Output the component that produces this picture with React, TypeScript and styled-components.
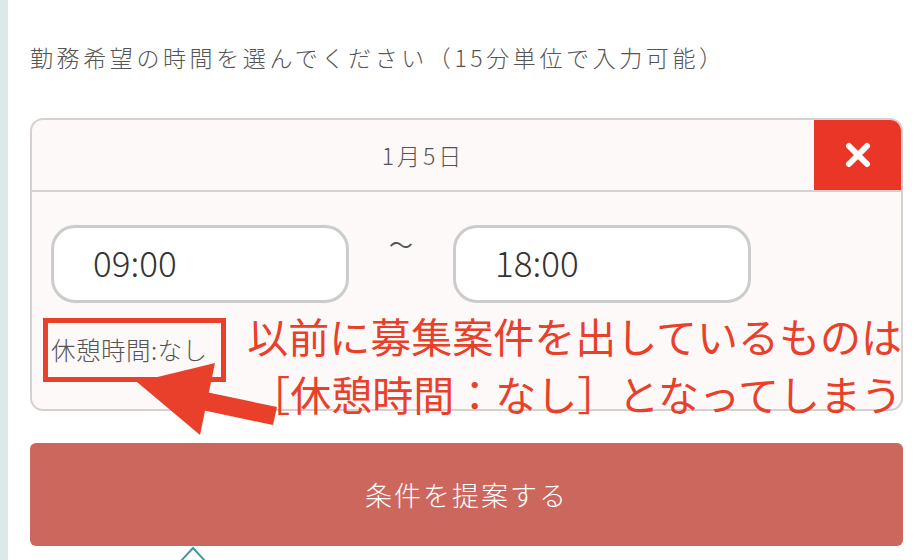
import styled, { createGlobalStyle } from 'styled-components';

const GlobalStyle = createGlobalStyle`
  body {
    margin: 0;
    background: #ffffff;
    font-family: "Noto Sans CJK JP", "Noto Sans", sans-serif;
  }
`;

const App = () => {
  return (
    <Page>
      <GlobalStyle />
      <Stripe />
      <Main>
        <Heading>勤務希望の時間を選んでください（15分単位で入力可能）</Heading>
        <Card>
          <CardHeader>
            <DateLabel>1月5日</DateLabel>
            <CloseButton aria-label="削除">
              <svg width="28" height="28" viewBox="0 0 28 28">
                <path
                  d="M5 5 L23 23 M23 5 L5 23"
                  stroke="#ffffff"
                  strokeWidth="6"
                  strokeLinecap="round"
                />
              </svg>
            </CloseButton>
          </CardHeader>
          <CardBody>
            <TimeRow>
              <TimeBox>09:00</TimeBox>
              <Tilde>〜</Tilde>
              <TimeBox>18:00</TimeBox>
            </TimeRow>
            <BreakLabel>休憩時間:なし</BreakLabel>
          </CardBody>
        </Card>
        <SubmitButton>条件を提案する</SubmitButton>
        <Chevron>
          <svg width="34" height="14" viewBox="0 0 34 14">
            <path d="M4 16 L17 2 L30 16" fill="none" stroke="#3f9c97" strokeWidth="2" />
          </svg>
        </Chevron>
      </Main>

      {/* annotation drawn over the screenshot */}
      <Highlight />
      <Arrow width="160" height="90" viewBox="0 0 160 90">
        <polygon points="7,27 85,8 70,80" fill="#e8402a" />
        <polygon points="76,37 147,52 143,70 72,55" fill="#e8402a" />
      </Arrow>
      <Note>
        <NoteLine>以前に募集案件を出しているものは</NoteLine>
        <NoteLine>［休憩時間：なし］となってしまう</NoteLine>
      </Note>
    </Page>
  );
};

const Page = styled.div`
  position: relative;
  display: flex;
  width: 914px;
  height: 560px;
  overflow: hidden;
`;

const Stripe = styled.div`
  width: 8px;
  flex-shrink: 0;
  background: #dce9ea;
`;

const Main = styled.div`
  display: flex;
  flex-direction: column;
  width: 873px;
  padding-left: 22px;
`;

const Heading = styled.div`
  margin-top: 38px;
  font-size: 23px;
  font-weight: 300;
  line-height: 38px;
  letter-spacing: 3.6px;
  color: #555555;
  white-space: nowrap;
`;

const Card = styled.div`
  margin-top: 42px;
  border: 2px solid #d8cfcf;
  border-radius: 13px;
  background: #fdf9f8;
  overflow: hidden;
`;

const CardHeader = styled.div`
  display: flex;
  align-items: stretch;
  height: 70px;
  border-bottom: 2px solid #d8cfcf;
`;

const DateLabel = styled.div`
  flex: 1;
  display: flex;
  align-items: center;
  justify-content: center;
  font-size: 23px;
  font-weight: 300;
  letter-spacing: 3px;
  color: #555555;
`;

const CloseButton = styled.div`
  width: 87px;
  display: flex;
  align-items: center;
  justify-content: center;
  background: #e93626;
`;

const CardBody = styled.div`
  padding: 33px 19px 48px;
`;

const TimeRow = styled.div`
  display: flex;
  align-items: flex-start;
`;

const TimeBox = styled.div`
  box-sizing: border-box;
  width: 298px;
  height: 78px;
  display: flex;
  align-items: center;
  padding: 0 0 5px 39px;
  border: 3px solid #cccccc;
  border-radius: 24px;
  background: #ffffff;
  font-size: 35px;
  font-weight: 300;
  color: #333333;
`;

const Tilde = styled.div`
  width: 104px;
  padding-top: 4px;
  text-align: center;
  font-size: 24px;
  line-height: 30px;
  color: #555555;
`;

const BreakLabel = styled.div`
  margin-top: 32px;
  font-size: 24.5px;
  font-weight: 300;
  line-height: 30px;
  letter-spacing: 0.5px;
  color: #555555;
`;

const SubmitButton = styled.div`
  margin-top: 32px;
  height: 104px;
  display: flex;
  align-items: center;
  justify-content: center;
  border-radius: 6px;
  background: #cc675e;
  font-size: 27px;
  font-weight: 300;
  letter-spacing: 2px;
  color: #ffffff;
`;

const Chevron = styled.div`
  height: 14px;
  padding-left: 146px;
  svg {
    display: block;
  }
`;

const Highlight = styled.div`
  position: absolute;
  left: 43px;
  top: 318px;
  width: 183px;
  height: 64px;
  box-sizing: border-box;
  border: 5px solid #e8402a;
`;

const Arrow = styled.svg`
  position: absolute;
  left: 130px;
  top: 355px;
`;

const Note = styled.div`
  position: absolute;
  right: 12px;
  top: 306px;
  text-align: right;
  font-size: 41px;
  line-height: 58px;
  color: #e8402a;
  white-space: nowrap;
`;

const NoteLine = styled.div``;

export default App;
